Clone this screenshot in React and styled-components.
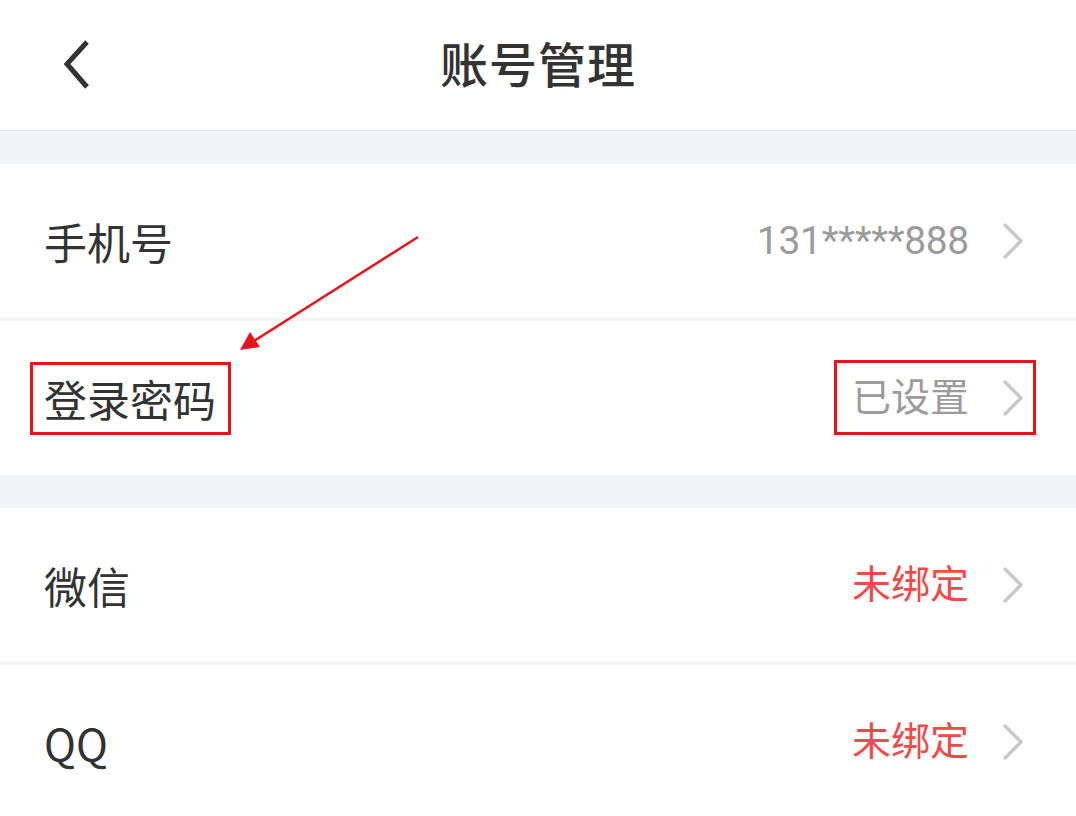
import React from "react";
import styled, { createGlobalStyle } from "styled-components";

const Global = createGlobalStyle`
  html, body { margin: 0; padding: 0; background: #ffffff; }
  body { font-family: Roboto, "Noto Sans CJK SC", sans-serif; }
`;

const Page = styled.div`
  position: relative;
  width: 1076px;
  height: 816px;
  overflow: hidden;
  background: #f3f4f6;
  display: flex;
  flex-direction: column;
`;

const Header = styled.header`
  flex: none;
  height: 130px;
  background: #fff;
  border-bottom: 1px solid #e3e4e6;
  display: grid;
  grid-template-columns: 160px 1fr 160px;
  align-items: center;
`;

const BackButton = styled.button`
  border: 0;
  background: none;
  padding: 0 0 0 61px;
  height: 60px;
  display: flex;
  align-items: center;
  cursor: pointer;
`;

const Title = styled.h1`
  margin: 0;
  text-align: center;
  font-family: "Noto Sans CJK SC", sans-serif;
  font-size: 48px;
  font-weight: 500;
  color: #333;
  letter-spacing: 1px;
  padding-bottom: 6px;
`;

const Group = styled.section`
  margin-top: ${(p) => p.$gap}px;
  background: #fff;
  display: flex;
  flex-direction: column;
  flex: ${(p) => (p.$fill ? "1 0 auto" : "none")};
`;

const Row = styled.div`
  flex: none;
  height: 154px;
  box-sizing: border-box;
  padding: 0 51px 0 44px;
  display: flex;
  align-items: center;
  justify-content: space-between;
  & + & {
    border-top: 3px solid #f3f4f6;
    height: 157px;
  }
`;

const Label = styled.span`
  font-family: "Noto Sans CJK SC", sans-serif;
  font-size: 43px;
  color: #333;
  line-height: 1;
`;

const Right = styled.div`
  display: flex;
  align-items: center;
  gap: 33px;
`;

const Value = styled.span`
  font-family: Roboto, "Noto Sans CJK SC", sans-serif;
  font-size: 39px;
  letter-spacing: ${(p) => (p.$digits ? "-0.3px" : "0")};
  color: ${(p) => (p.$warn ? "#f04a4a" : "#9b9b9b")};
  line-height: 1;
`;

const Highlight = styled.span`
  position: relative;
  display: inline-flex;
  align-items: center;
  &::after {
    content: "";
    position: absolute;
    top: ${(p) => p.$t}px;
    bottom: ${(p) => p.$b}px;
    left: ${(p) => p.$l}px;
    right: ${(p) => p.$r}px;
    border: 3px solid #e8141c;
    pointer-events: none;
  }
`;

const ArrowLayer = styled.svg`
  position: absolute;
  left: 0;
  top: 0;
  pointer-events: none;
`;

const Chevron = () => (
  <svg width="23" height="38" viewBox="0 0 23 38">
    <polyline
      points="3,3 19,19 3,35"
      fill="none"
      stroke="#c9c9c9"
      strokeWidth="3.5"
      strokeLinecap="round"
      strokeLinejoin="round"
    />
  </svg>
);

const BackIcon = () => (
  <svg width="30" height="50" viewBox="0 0 30 50">
    <polyline
      points="26,2 6,24 26,47"
      fill="none"
      stroke="#333"
      strokeWidth="5"
      strokeLinejoin="miter"
    />
  </svg>
);

export default function App() {
  return (
    <>
      <Global />
      <Page>
        <Header>
          <BackButton aria-label="返回">
            <BackIcon />
          </BackButton>
          <Title>账号管理</Title>
          <div />
        </Header>

        <Group $gap={33}>
          <Row>
            <Label>手机号</Label>
            <Right>
              <Value $digits>131*****888</Value>
              <Chevron />
            </Right>
          </Row>
          <Row>
            <Highlight $t={-15} $b={-15} $l={-14} $r={-15}>
              <Label>登录密码</Label>
            </Highlight>
            <Highlight $t={-19} $b={-17} $l={-18} $r={-11}>
              <Right>
                <Value>已设置</Value>
                <Chevron />
              </Right>
            </Highlight>
          </Row>
        </Group>

        <Group $gap={33} $fill>
          <Row>
            <Label>微信</Label>
            <Right>
              <Value $warn>未绑定</Value>
              <Chevron />
            </Right>
          </Row>
          <Row>
            <Label>QQ</Label>
            <Right>
              <Value $warn>未绑定</Value>
              <Chevron />
            </Right>
          </Row>
        </Group>

        <ArrowLayer width="1076" height="816">
          <line x1="418" y1="237" x2="254" y2="341" stroke="#e8141c" strokeWidth="2.5" />
          <polygon points="240,350 250,332 260,347" fill="#e8141c" />
        </ArrowLayer>
      </Page>
    </>
  );
}
